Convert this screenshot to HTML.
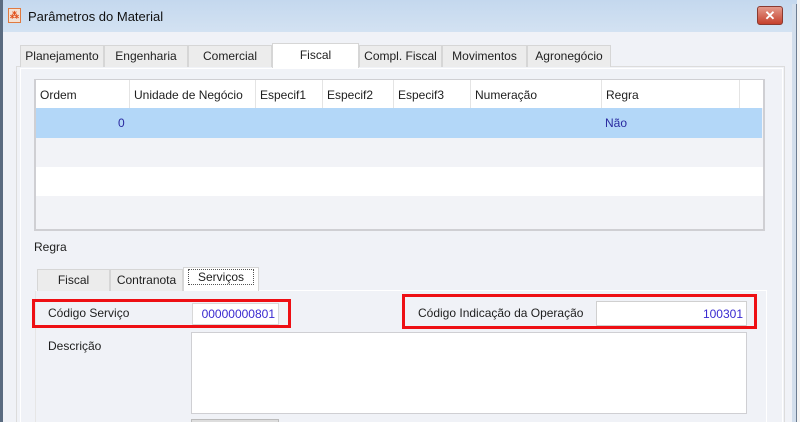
<!DOCTYPE html>
<html><head><style>
*{margin:0;padding:0;box-sizing:border-box}
html,body{width:800px;height:422px;overflow:hidden}
body{background:#f0f2f7;font-family:"Liberation Sans",sans-serif;font-size:12px;color:#1e1e1e;position:relative}
.a{position:absolute}
.tab{position:absolute;top:45px;height:22px;background:#ececec;border:1px solid #d6d6d6;border-bottom:none;text-align:center;line-height:21px;font-size:12px}
.st{position:absolute;top:269px;height:22px;background:#ececec;border:1px solid #d6d6d6;border-bottom:none;text-align:center;line-height:21px}
.hd{position:absolute;top:80px;height:28px;line-height:30px;padding-left:4px;border-right:1px solid #e4e4e4}
</style></head><body>
<div class="a" style="left:0;top:0;width:800px;height:32px;background:linear-gradient(#c4d8ee,#d3e2f2)"></div>
<div class="a" style="left:0;top:0;width:3px;height:422px;background:#5a6b80"></div>
<div class="a" style="left:8px;top:8px;width:13px;height:15px;background:#f3e1d4;border:1px solid #e07a40"></div>
<div class="a" style="left:10px;top:10px;width:9px;height:11px;color:#e2501a;font-size:9px;line-height:11px;font-weight:bold">⁂</div>
<div class="a" style="left:28px;top:9px;font-size:13px;color:#111">Parâmetros do Material</div>
<div class="a" style="left:757px;top:6px;width:26px;height:19px;border-radius:3px;background:linear-gradient(#e49a8c,#c6402c);border:1px solid #8a3a30;color:#fff;text-align:center;font-weight:bold;line-height:17px;font-size:13px">✕</div>
<div class="a" style="left:16px;top:66px;width:769px;height:370px;border:1px solid #dcdcdc;background:#f0f2f7"></div>
<div class="a" style="left:20px;top:68px;width:763px;height:370px;border:1px solid #fff;background:#f0f2f7"></div>
<div class="tab" style="left:20px;width:84px">Planejamento</div>
<div class="tab" style="left:104px;width:84px">Engenharia</div>
<div class="tab" style="left:188px;width:84px">Comercial</div>
<div class="tab" style="left:272px;width:87px;top:43px;height:25px;background:#fff;line-height:22px">Fiscal</div>
<div class="tab" style="left:359px;width:83px">Compl. Fiscal</div>
<div class="tab" style="left:442px;width:85px">Movimentos</div>
<div class="tab" style="left:527px;width:84px">Agronegócio</div>
<div class="a" style="left:34px;top:79px;width:731px;height:152px;border:2px solid #cfcfd3;background:#f2f3f7"></div>
<div class="a" style="left:36px;top:80px;width:727px;height:28px;background:#fff"></div>
<div class="hd" style="left:36px;width:94px">Ordem</div>
<div class="hd" style="left:130px;width:126px">Unidade de Negócio</div>
<div class="hd" style="left:256px;width:67px">Especif1</div>
<div class="hd" style="left:323px;width:71px">Especif2</div>
<div class="hd" style="left:394px;width:77px">Especif3</div>
<div class="hd" style="left:471px;width:131px">Numeração</div>
<div class="hd" style="left:602px;width:138px">Regra</div>
<div class="a" style="left:36px;top:108px;width:726px;height:30px;background:#b3d7f8"></div>
<div class="a" style="left:118px;top:116px;color:#2a2aa0">0</div>
<div class="a" style="left:605px;top:116px;color:#2a2aa0">Não</div>
<div class="a" style="left:36px;top:167px;width:727px;height:29px;background:#fff"></div>
<div class="a" style="left:34px;top:240px">Regra</div>
<div class="a" style="left:35px;top:290px;width:732px;height:150px;border:1px solid #fff;border-left-color:#e6e6e6;background:#f0f2f7"></div>
<div class="st" style="left:37px;width:73px">Fiscal</div>
<div class="st" style="left:110px;width:73px">Contranota</div>
<div class="st" style="left:183px;width:76px;top:267px;height:24px;background:#fff;line-height:18px"><span style="border:1px dotted #555;padding:0 9px">Serviços</span></div>
<div class="a" style="left:192px;top:303px;width:87px;height:22px;background:#fff;border:1px solid #d8d8d8;color:#3a2ad0;text-align:right;padding-right:3px;line-height:21px">00000000801</div>
<div class="a" style="left:32px;top:299px;width:259px;height:29px;border:3px solid #ee0f14"></div>
<div class="a" style="left:48px;top:306px">Código Serviço</div>
<div class="a" style="left:596px;top:301px;width:151px;height:25px;background:#fff;border:1px solid #d0d0d0;color:#3a2ad0;text-align:right;padding-right:3px;line-height:24px">100301</div>
<div class="a" style="left:402px;top:294px;width:355px;height:35px;border:3px solid #ee0f14"></div>
<div class="a" style="left:418px;top:306px">Código Indicação da Operação</div>
<div class="a" style="left:48px;top:339px">Descrição</div>
<div class="a" style="left:191px;top:332px;width:556px;height:82px;background:#fff;border:1px solid #cfcfd3"></div>
<div class="a" style="left:191px;top:419px;width:88px;height:8px;background:#ddd;border:1px solid #bbb"></div>
<div class="a" style="left:792px;top:4px;width:4px;height:418px;background:#d2deec"></div>
<div class="a" style="left:796px;top:4px;width:1px;height:418px;background:#6c7d92"></div>
<div class="a" style="left:797px;top:0;width:3px;height:422px;background:#f4f4f4"></div>
</body></html>
